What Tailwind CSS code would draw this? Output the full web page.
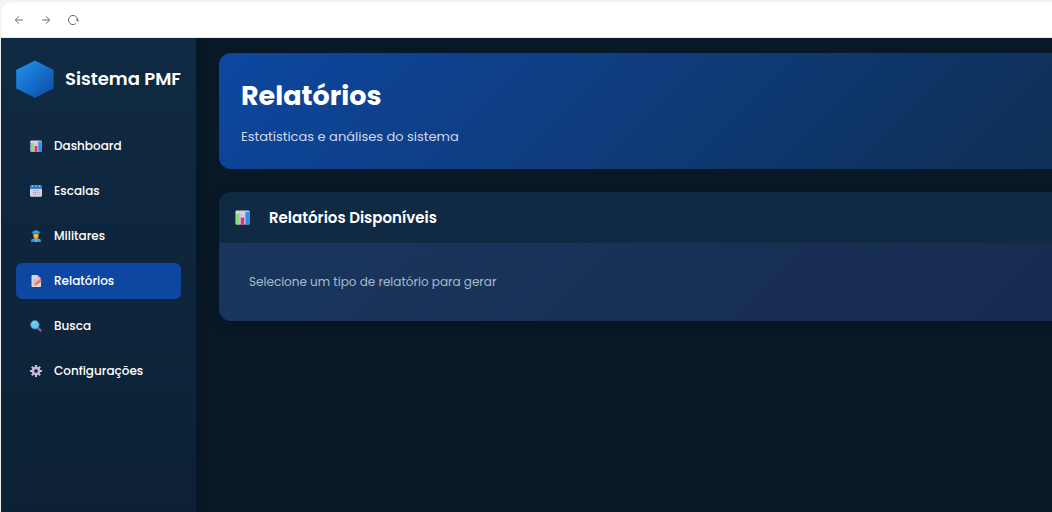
<!DOCTYPE html>
<html lang="pt-BR">
<head>
<meta charset="utf-8">
<meta name="viewport" content="width=device-width, initial-scale=1">
<title>Sistema PMF</title>
<script src="https://cdn.jsdelivr.net/npm/@tailwindcss/browser@4"></script>
</head>
<body class="bg-[#f3f3f0] font-['Poppins','Inter',sans-serif] text-white">
<svg class="hidden" aria-hidden="true">
  <defs>
    <symbol id="chart" viewBox="0 0 16 16">
      <rect x="0.5" y="0.5" width="15" height="15" rx="1.2" fill="#dcd3e4"/>
      <path d="M5.3 1v14M10.5 1v14M1 5.5h14M1 10h14" stroke="#c1b3cf" stroke-width=".6"/>
      <rect x="1.2" y="4" width="3.6" height="11.5" fill="#83dc72"/>
      <rect x="6.2" y="8" width="3.6" height="7.5" fill="#e32f74"/>
      <rect x="11.2" y="2" width="3.9" height="13.5" fill="#2f8fe0"/>
    </symbol>
  </defs>
</svg>
<div class="ml-px mt-0.5 flex min-h-[calc(100vh-2px)] flex-col">
  <header class="relative z-20 flex h-9 shrink-0 items-center gap-[15px] rounded-tl-xl border-b border-[#e6ebef] bg-white pl-3 text-[#6d6d6d]">
    <button type="button" aria-label="Voltar" class="size-3"><svg viewBox="0 0 12 12" class="size-3" fill="none" stroke="currentColor"><path d="M10 6H2.5M6 2.3 2.3 6 6 9.7"/></svg></button>
    <button type="button" aria-label="Avançar" class="size-3"><svg viewBox="0 0 12 12" class="size-3" fill="none" stroke="currentColor"><path d="M2 6h7.5M6 2.3 9.7 6 6 9.7"/></svg></button>
    <button type="button" aria-label="Recarregar" class="size-3"><svg viewBox="0 0 12 12" class="size-3" fill="none" stroke="currentColor"><path d="M8.9 9.6A4.6 4.6 0 1 1 10.6 6"/><path d="M8.2 5.6h3.3v2.3Z" fill="currentColor" stroke="none"/></svg></button>
  </header>
  <div class="flex grow bg-[#081827]">
    <aside class="z-10 w-[195px] shrink-0 bg-linear-to-b from-[#102a43] to-[#0c2135] px-[15px] pt-[22px] shadow-[2px_0_8px_#0000001a]">
      <div class="flex items-center gap-[11px]">
        <svg viewBox="0 0 38 38" class="size-[38px] shrink-0" aria-hidden="true">
          <defs><linearGradient id="logo" x1="0" y1="0" x2="1" y2="1"><stop stop-color="#2196f3"/><stop offset="1" stop-color="#0d47a1"/></linearGradient></defs>
          <path d="M19 .5 37.7 10v18.5L19 37.7.2 28.5V10Z" fill="url(#logo)"/>
        </svg>
        <span class="text-lg leading-7 font-semibold whitespace-nowrap">Sistema PMF</span>
      </div>
      <nav class="mt-[30px] flex flex-col gap-[9px] text-xs font-medium">
        <a href="#dashboard" class="flex h-9 items-center gap-3 rounded-md px-3.5"><svg class="size-3"><use href="#chart"/></svg>Dashboard</a>
        <a href="#escalas" class="flex h-9 items-center gap-3 rounded-md px-3.5">
          <svg viewBox="0 0 12 12" class="size-3"><rect y=".5" width="12" height="11.2" rx="1.3" fill="#dcd3e4"/><path d="M0 4V1.8Q0 .5 1.3.5h9.4Q12 .5 12 1.8V4Z" fill="#2f7fcb"/><path d="M2.5 0v1.8M6 0v1.8M9.5 0v1.8" stroke="#8fc9f1" stroke-width=".8"/><path d="M3 5.6h6.5M3 7.5h6.5M3 9.4h4" stroke="#9a91ae" stroke-width="1" stroke-dasharray="1.2 .9"/><path d="M8.5 9.9 10 8.3" stroke="#559cdb"/></svg>Escalas</a>
        <a href="#militares" class="flex h-9 items-center gap-3 rounded-md px-3.5">
          <svg viewBox="0 0 12 12" class="size-3"><path d="M1 12V10.8Q1 8.7 3.2 8.4L6 8l2.8.4Q11 8.7 11 10.8V12Z" fill="#2d91df"/><path d="M4.7 7h2.6v1.8L6 10 4.7 8.8Z" fill="#df951f"/><ellipse cx="6" cy="5.2" rx="2.8" ry="3" fill="#f9b52d"/><path d="M3 4.6Q2.6 6.4 3.5 6.5V4ZM9 4.6Q9.4 6.4 8.5 6.5V4Z" fill="#714033"/><path d="M1.6 2 6 0l4.4 2-1.2 1.3v1Q6 3.3 2.8 4.3v-1Z" fill="#3299e6"/><path d="M3 3.7q3-1 6 0v.6q-3-1-6 0Z" fill="#24579f"/><circle cx="6" cy="1.8" r=".5" fill="#ffd45a"/><path d="m4.8 8.6 1.2 3.2 1.2-3.2" stroke="#7dcbff" stroke-width=".8" fill="none"/><path d="M8.3 10h1.2" stroke="#ffd45a" stroke-width=".8"/></svg>Militares</a>
        <a href="#relatorios" aria-current="page" class="flex h-9 items-center gap-3 rounded-md bg-[#0d47a1] px-3.5">
          <svg viewBox="0 0 12 12" class="size-3"><path d="M2.5 0h5L11 3.5V11q0 1-1 1H2.5q-1 0-1-1V1q0-1 1-1Z" fill="#ded4e6"/><path d="M7.5 0 11 3.5H8.5q-1 0-1-1Z" fill="#b7aac5"/><path d="M3 5h5M3 7h4M3 9h2" stroke="#a99bb9" stroke-width=".7"/><path d="m4 11 .7-2.4 4.8-4 1.7 1.8-4.8 4Z" fill="#f07a3c"/><path d="m9.5 4.6 1-.8 1.5 1.8-.8.8Z" fill="#e8416a"/><path d="m4 11 .7-2.4 1.7 1.8Z" fill="#f8c383"/></svg>Relatórios</a>
        <a href="#busca" class="flex h-9 items-center gap-3 rounded-md px-3.5">
          <svg viewBox="0 0 12 12" class="size-3"><path d="m8 8 2.6 2.6" stroke="#8d5296" stroke-width="2.5" stroke-linecap="round"/><circle cx="4.9" cy="4.7" r="4.3" fill="#5ccdf1" stroke="#3f83a8" stroke-width=".7"/><path d="M2.5 4Q3.2 2.3 4.8 2.2" stroke="#9ae6fc" stroke-width=".8" fill="none"/></svg>Busca</a>
        <a href="#configuracoes" class="flex h-9 items-center gap-3 rounded-md px-3.5">
          <svg viewBox="0 0 12 12" class="size-3" fill="none"><path d="M6 0v2.5M6 9.5V12M0 6h2.5M9.5 6H12M1.8 1.8l1.8 1.8M8.4 8.4l1.8 1.8M10.2 1.8 8.4 3.6M3.6 8.4l-1.8 1.8" stroke="#cfc1da" stroke-width="2"/><circle cx="6" cy="6" r="3.1" stroke="#c6b6d3" stroke-width="2.6"/><circle cx="6" cy="6" r="1.7" stroke="#5c5071" stroke-width=".7"/></svg>Configurações</a>
      </nav>
    </aside>
    <main class="flex min-w-0 grow flex-col gap-[23px] pt-[15px] pl-[23px]">
      <section class="rounded-l-xl bg-linear-135 from-[#0d47a1] to-[#0f2f55] px-[22px] pt-[22px] pb-[21px]">
        <h1 class="text-[27px] leading-[42px] font-bold">Relatórios</h1>
        <p class="mt-2 text-[13px] leading-[23px] text-[#cfdaec]">Estatísticas e análises do sistema</p>
      </section>
      <section class="overflow-hidden rounded-l-xl shadow-[0_4px_12px_#00000026]">
        <div class="flex h-[51px] items-center gap-[19px] bg-[#102a43] pl-4">
          <svg class="size-[15px]" aria-hidden="true"><use href="#chart"/></svg>
          <h2 class="text-[15px] leading-6 font-semibold">Relatórios Disponíveis</h2>
        </div>
        <div class="bg-linear-135 from-[#1a365d] to-[#172b50] px-[30px] py-7">
          <p class="text-xs leading-[22px] text-[#a5bccb]">Selecione um tipo de relatório para gerar</p>
        </div>
      </section>
    </main>
  </div>
</div>
</body>
</html>
